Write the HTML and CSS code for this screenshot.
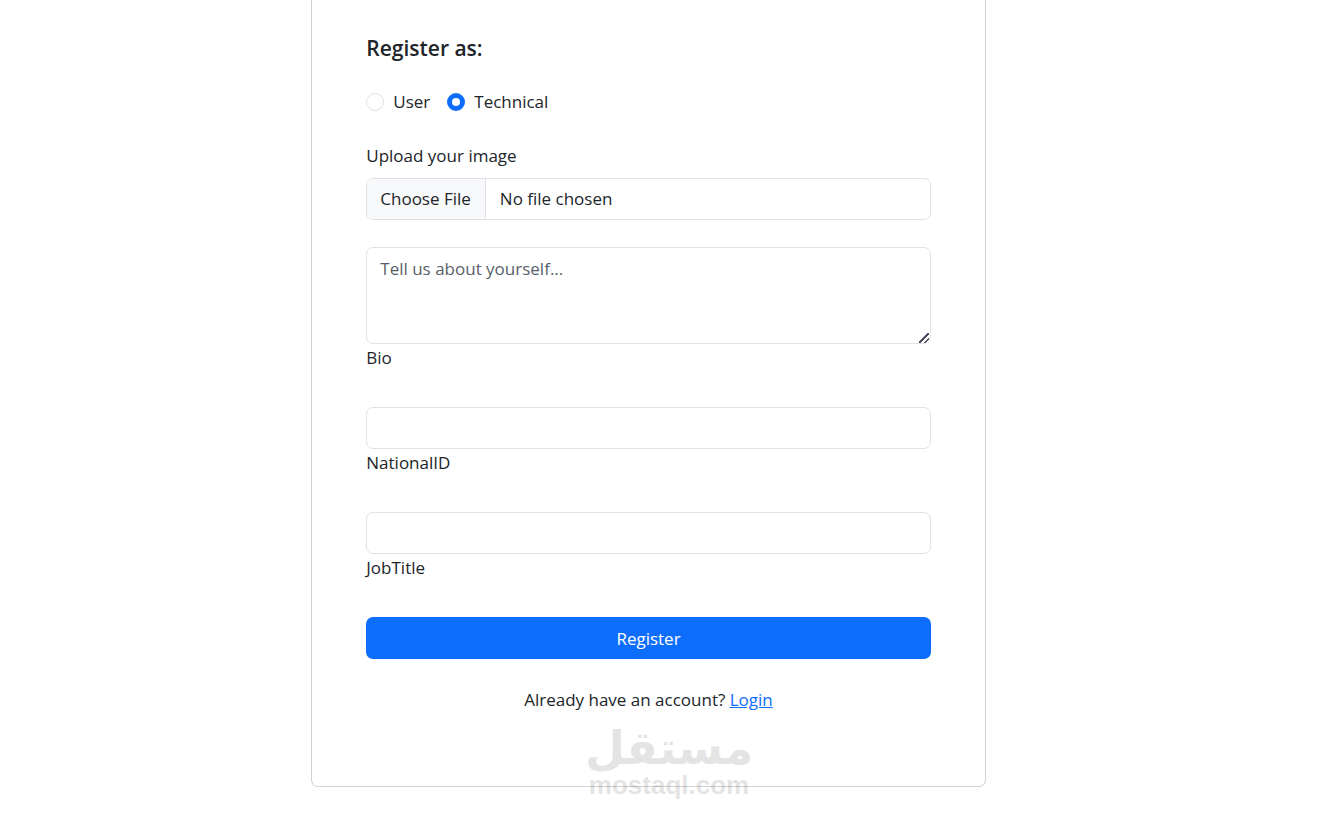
FILE: index.html
```html
<!DOCTYPE html>
<html lang="en">
<head>
<meta charset="utf-8">
<meta name="viewport" content="width=device-width, initial-scale=1">
<title>Register</title>
<link rel="stylesheet" href="styles.css">
</head>
<body>
<main class="page">
  <form class="card">
    <h1 class="heading">Register as:</h1>
    <div class="choices">
      <label class="choice"><input class="radio" type="radio" name="role">User</label>
      <label class="choice"><input class="radio" type="radio" name="role" checked>Technical</label>
    </div>
    <div class="upload">
      <label class="label" for="image">Upload your image</label>
      <input class="control file" type="file" id="image">
    </div>
    <div class="field">
      <textarea class="control bio" id="bio" placeholder="Tell us about yourself..."></textarea>
      <label class="label" for="bio">Bio</label>
    </div>
    <div class="field">
      <input class="control" type="text" id="national">
      <label class="label" for="national">NationalID</label>
    </div>
    <div class="field">
      <input class="control" type="text" id="job">
      <label class="label" for="job">JobTitle</label>
    </div>
    <button class="submit" type="button">Register</button>
    <p class="signin">Already have an account? <a class="link" href="#login">Login</a></p>
  </form>
  <div class="watermark">
    <span class="mark-ar" lang="ar" dir="rtl">مستقل</span>
    <span class="mark-en">mostaql.com</span>
  </div>
</main>
</body>
</html>
```
FILE: styles.css
```css
* { box-sizing: border-box; }

body {
  margin: 0;
  background: #fff;
  color: #212529;
  font: 17px/27px "Segoe UI", "Open Sans", "Noto Sans", sans-serif;
}

.page {
  position: relative;
  display: flex;
  justify-content: center;
  padding: 0 41px 27px 0;
}

.card {
  display: flex;
  flex-direction: column;
  width: 52%;
  min-width: 320px;
  padding: 35px 54px 73px;
  border: 1px solid #d2d2d2;
  border-top: 0;
  border-radius: 0 0 7px 7px;
}

.heading {
  margin: 0 0 27px;
  font-size: 21px;
  font-weight: 600;
  line-height: 26px;
}

.choices {
  display: flex;
  gap: 17px;
  margin-bottom: 27px;
}

.choice {
  display: flex;
  align-items: center;
  gap: 9px;
}

.radio {
  appearance: none;
  width: 18px;
  height: 18px;
  margin: 0;
  border: 1px solid #dee2e6;
  border-radius: 50%;
  background: #fff;
}

.radio:checked { border: 5px solid #0d6efd; }

.upload {
  display: flex;
  flex-direction: column;
  gap: 9px;
  margin-bottom: 27px;
}

.field {
  display: flex;
  flex-direction: column;
  margin-bottom: 36px;
}

.control {
  display: block;
  width: 100%;
  height: 42px;
  margin: 0;
  padding: 7px 13px;
  border: 1px solid #dee2e6;
  border-radius: 7px;
  background: #fff;
  color: #212529;
  font: inherit;
}

.file {
  padding: 0;
  overflow: hidden;
  line-height: 40px;
}

.file::file-selector-button {
  height: 40px;
  margin: 0 14px 0 0;
  padding: 0 14px 0 13px;
  border: 0;
  border-right: 1px solid #dee2e6;
  background: #f8f9fa;
  color: #212529;
  font: inherit;
}

.bio {
  height: 97px;
  resize: vertical;
}

.bio::placeholder { color: #595f69; }

.bio::-webkit-resizer {
  background: linear-gradient(135deg, transparent 43%, #4f4d63 43% 56%, transparent 56% 71%, #4f4d63 71% 84%, transparent 84%) right 1px bottom 0 / 10px 10px no-repeat;
}

.submit {
  height: 42px;
  border: 0;
  border-radius: 7px;
  background: #0d6efd;
  color: #fff;
  font: inherit;
}

.signin {
  margin: 27px 0 0;
  text-align: center;
}

.link { color: #0d6efd; }

.watermark {
  position: absolute;
  right: 0;
  bottom: 15px;
  left: 0;
  display: flex;
  flex-direction: column;
  align-items: center;
  color: #000;
  font-weight: 700;
  opacity: 0.1;
  pointer-events: none;
}

.mark-ar {
  font-family: "DejaVu Sans", sans-serif;
  font-size: 46px;
  line-height: 46px;
}

.mark-en {
  font-family: "Liberation Sans", Arial, sans-serif;
  font-size: 26px;
  line-height: 28px;
}
```
